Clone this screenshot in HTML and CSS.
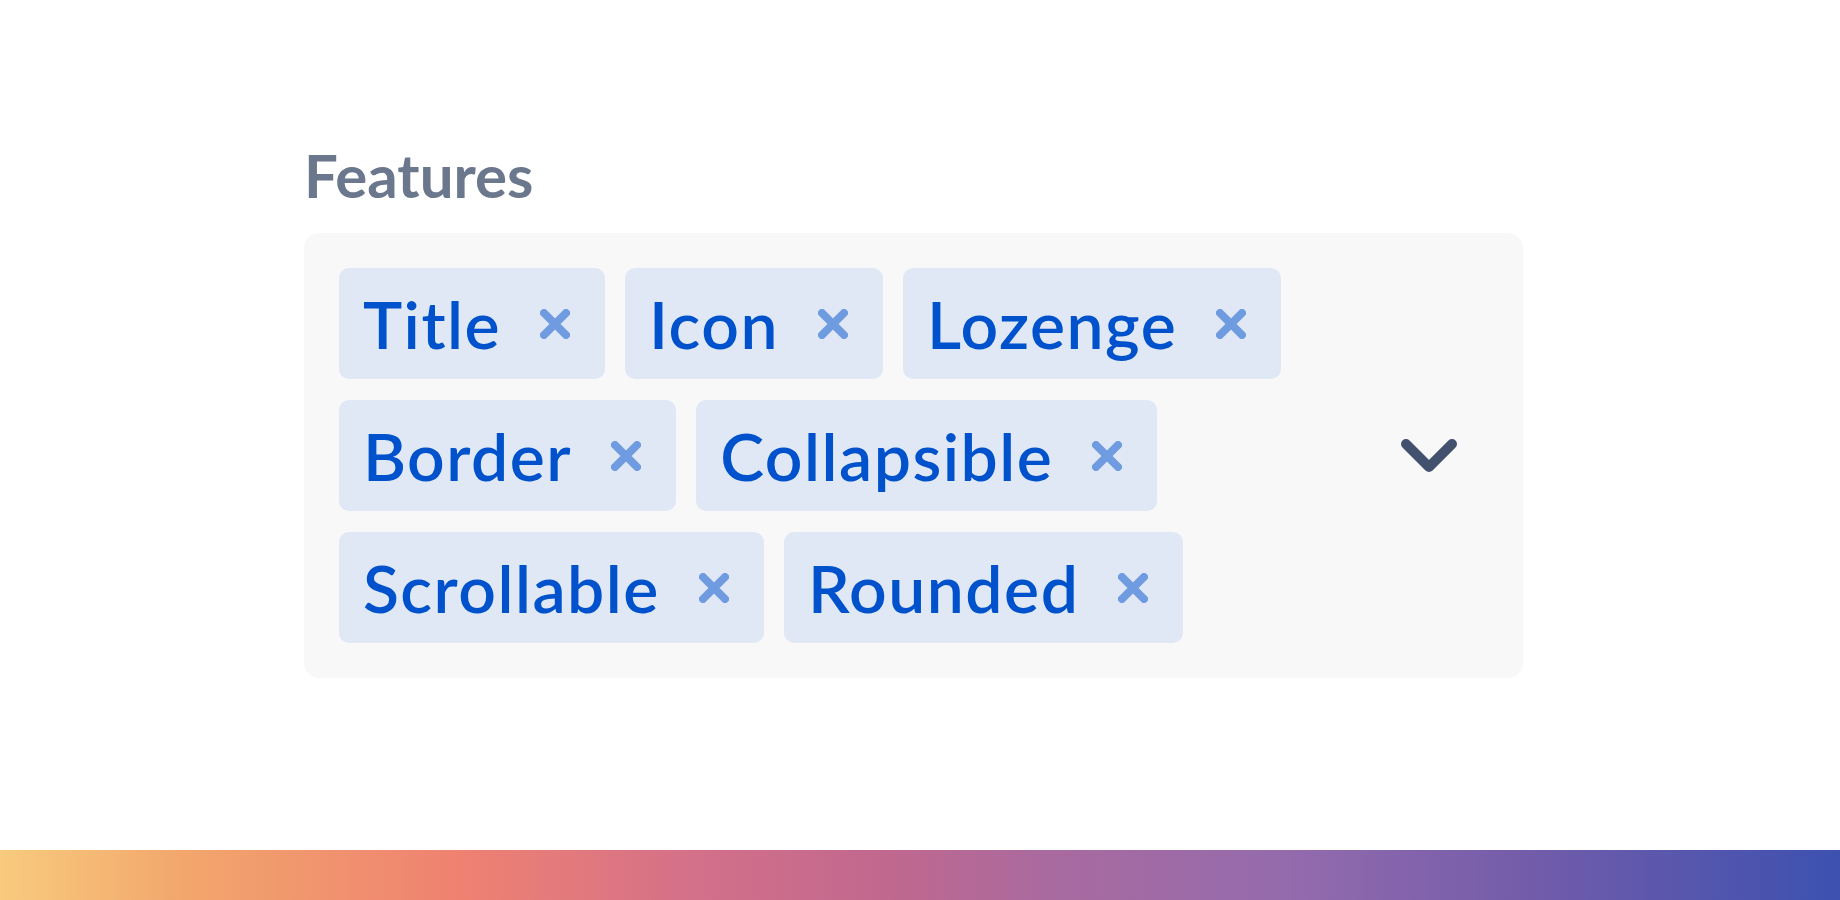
FILE: index.html
```html
<!DOCTYPE html>
<html lang="en">
<head>
<meta charset="utf-8">
<title>Features</title>
<link rel="stylesheet" href="styles.css">
</head>
<body>
<main class="page">
  <div class="field">
    <label class="field-label">Features</label>
    <div class="select">
      <div class="values">
        <span class="tag"><span class="tag-text">Title</span><span class="tag-remove"><svg viewBox="0 0 30 30" width="30" height="30"><path d="M4 4 L26 26 M26 4 L4 26"/></svg></span></span>
        <span class="tag"><span class="tag-text">Icon</span><span class="tag-remove"><svg viewBox="0 0 30 30" width="30" height="30"><path d="M4 4 L26 26 M26 4 L4 26"/></svg></span></span>
        <span class="tag"><span class="tag-text">Lozenge</span><span class="tag-remove"><svg viewBox="0 0 30 30" width="30" height="30"><path d="M4 4 L26 26 M26 4 L4 26"/></svg></span></span>
        <span class="tag"><span class="tag-text">Border</span><span class="tag-remove"><svg viewBox="0 0 30 30" width="30" height="30"><path d="M4 4 L26 26 M26 4 L4 26"/></svg></span></span>
        <span class="tag"><span class="tag-text">Collapsible</span><span class="tag-remove"><svg viewBox="0 0 30 30" width="30" height="30"><path d="M4 4 L26 26 M26 4 L4 26"/></svg></span></span>
        <span class="tag"><span class="tag-text">Scrollable</span><span class="tag-remove"><svg viewBox="0 0 30 30" width="30" height="30"><path d="M4 4 L26 26 M26 4 L4 26"/></svg></span></span>
        <span class="tag"><span class="tag-text">Rounded</span><span class="tag-remove"><svg viewBox="0 0 30 30" width="30" height="30"><path d="M4 4 L26 26 M26 4 L4 26"/></svg></span></span>
      </div>
      <div class="indicator">
        <svg viewBox="0 0 56 34" width="56" height="34"><path d="M5 5 L28 28 L51 5"/></svg>
      </div>
    </div>
  </div>
</main>
<div class="gradient-bar"></div>
</body>
</html>
```

FILE: styles.css
```css
html, body {
  margin: 0;
  padding: 0;
  background: #ffffff;
}

body {
  min-height: 100vh;
  display: flex;
  flex-direction: column;
  font-family: "Lato", "Segoe UI", "Noto Sans", sans-serif;
}

.page {
  flex: 1;
  padding: 139px 0 0 304px;
}

.field {
  width: 1219px;
}

.field-label {
  display: block;
  font-size: 60px;
  line-height: 72px;
  font-weight: 700;
  color: #6b778c;
  margin-bottom: 22px;
}

.select {
  display: flex;
  align-items: center;
  background: #f8f8f8;
  border-radius: 15px;
  padding: 35px 0 35px 35px;
}

.values {
  flex: 1;
  display: flex;
  flex-wrap: wrap;
  gap: 21px 20px;
}

.tag {
  display: flex;
  align-items: center;
  height: 111px;
  box-sizing: border-box;
  padding: 0 35px 0 24px;
  background: #e0e8f5;
  border-radius: 10px;
}

.tag-text {
  font-size: 66px;
  font-weight: 600;
  letter-spacing: 1.5px;
  color: #0052cc;
  line-height: 1.2;
  margin-right: 39px;
}

.tag-remove {
  display: flex;
}

.tag-remove svg path {
  fill: none;
  stroke: #6f9be0;
  stroke-width: 8;
  stroke-linecap: round;
}

.indicator {
  padding: 0 66px 0 38px;
  display: flex;
  justify-content: center;
  align-items: center;
}

.indicator svg path {
  fill: none;
  stroke: #42526e;
  stroke-width: 10;
  stroke-linecap: round;
  stroke-linejoin: round;
}

.gradient-bar {
  height: 50px;
  background: linear-gradient(to right, #f8cb7e 0%, #f2a66c 10%, #ef8171 25%, #d3708a 38%, #c1688e 48%, #a96a9f 57%, #946bad 70%, #735caa 83%, #3c51b0 100%);
}
```
